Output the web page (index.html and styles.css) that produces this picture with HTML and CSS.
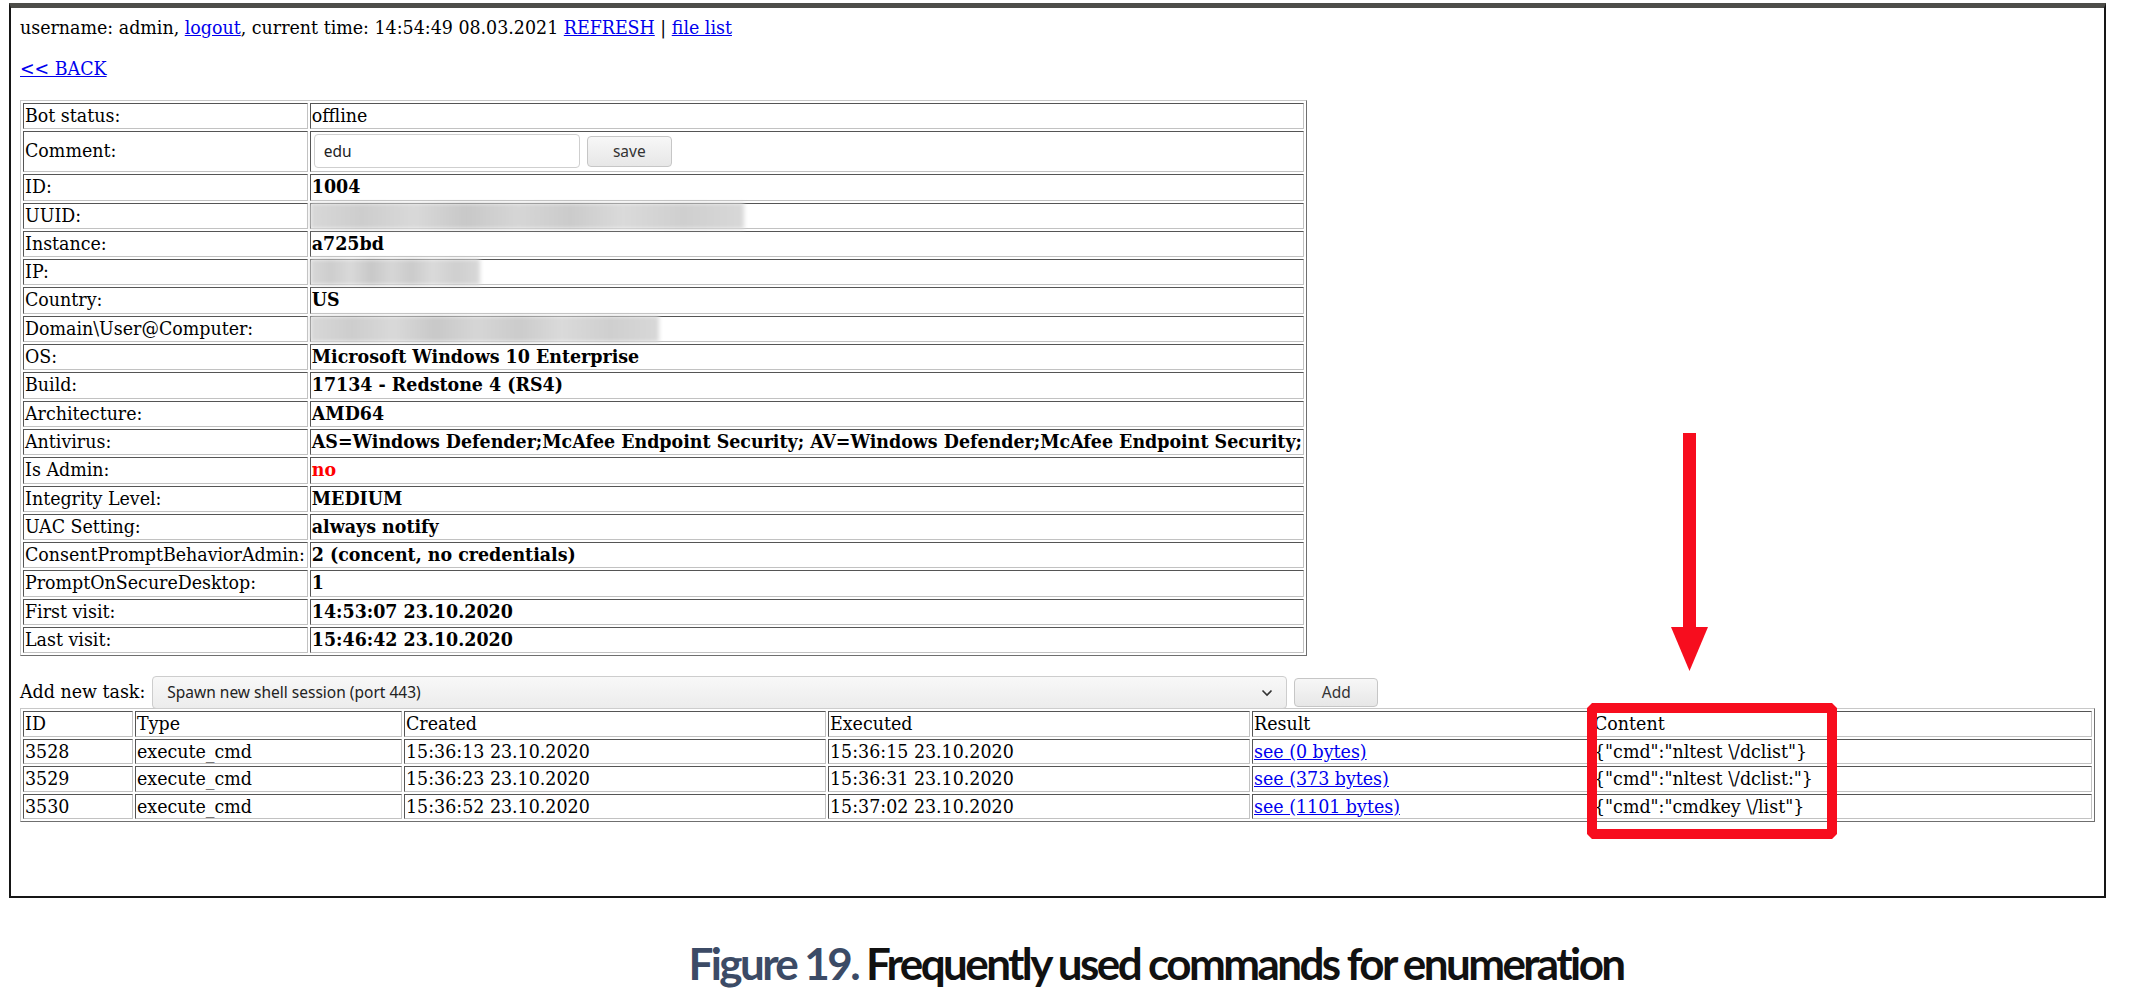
FILE: index.html
```html
<!DOCTYPE html>
<html>
<head>
<meta charset="utf-8">
<title>Bot details</title>
<link rel="stylesheet" href="styles.css">
</head>
<body>
<div class="frame">
  <p class="topline">username: admin, <a href="#">logout</a>, current time: 14:54:49 08.03.2021 <a href="#">REFRESH</a> | <a href="#">file list</a></p>
  <p class="back"><a href="#">&lt;&lt; BACK</a></p>
  <table class="info">
    <tr><td class="k">Bot status:</td><td>offline</td></tr>
    <tr class="comment-row"><td class="k">Comment:</td><td><div class="comment-form"><input class="comment-input" type="text" value="edu"><button class="btn btn-save">save</button></div></td></tr>
    <tr><td class="k">ID:</td><td><b>1004</b></td></tr>
    <tr><td class="k">UUID:</td><td class="blurred"><span class="blur blur-uuid"></span></td></tr>
    <tr><td class="k">Instance:</td><td><b>a725bd</b></td></tr>
    <tr><td class="k">IP:</td><td class="blurred"><span class="blur blur-ip"></span></td></tr>
    <tr><td class="k">Country:</td><td><b>US</b></td></tr>
    <tr><td class="k">Domain\User@Computer:</td><td class="blurred"><span class="blur blur-domain"></span></td></tr>
    <tr><td class="k">OS:</td><td><b>Microsoft Windows 10 Enterprise</b></td></tr>
    <tr><td class="k">Build:</td><td><b>17134 - Redstone 4 (RS4)</b></td></tr>
    <tr><td class="k">Architecture:</td><td><b>AMD64</b></td></tr>
    <tr><td class="k">Antivirus:</td><td><b>AS=Windows Defender;McAfee Endpoint Security; AV=Windows Defender;McAfee Endpoint Security;</b></td></tr>
    <tr><td class="k">Is Admin:</td><td><b class="red">no</b></td></tr>
    <tr><td class="k">Integrity Level:</td><td><b>MEDIUM</b></td></tr>
    <tr><td class="k">UAC Setting:</td><td><b>always notify</b></td></tr>
    <tr><td class="k">ConsentPromptBehaviorAdmin:</td><td><b>2 (concent, no credentials)</b></td></tr>
    <tr><td class="k">PromptOnSecureDesktop:</td><td><b>1</b></td></tr>
    <tr><td class="k">First visit:</td><td><b>14:53:07 23.10.2020</b></td></tr>
    <tr><td class="k">Last visit:</td><td><b>15:46:42 23.10.2020</b></td></tr>
  </table>
  <div class="task-form">
    <span class="task-label">Add new task:</span>
    <span class="select-wrap">
      <select class="task-select"><option>Spawn new shell session (port 443)</option></select>
      <svg class="chevron" width="12" height="8" viewBox="0 0 12 8"><path d="M1.5 1.5 L6 6 L10.5 1.5" fill="none" stroke="#333" stroke-width="1.6"/></svg>
    </span>
    <button class="btn btn-add">Add</button>
  </div>
  <table class="tasks">
    <colgroup><col class="c-id"><col class="c-type"><col class="c-created"><col class="c-exec"><col class="c-result"><col class="c-content"></colgroup>
    <tr><td>ID</td><td>Type</td><td>Created</td><td>Executed</td><td>Result</td><td>Content</td></tr>
    <tr><td>3528</td><td>execute_cmd</td><td>15:36:13 23.10.2020</td><td>15:36:15 23.10.2020</td><td><a href="#">see (0 bytes)</a></td><td>{"cmd":"nltest \/dclist"}</td></tr>
    <tr><td>3529</td><td>execute_cmd</td><td>15:36:23 23.10.2020</td><td>15:36:31 23.10.2020</td><td><a href="#">see (373 bytes)</a></td><td>{"cmd":"nltest \/dclist:"}</td></tr>
    <tr><td>3530</td><td>execute_cmd</td><td>15:36:52 23.10.2020</td><td>15:37:02 23.10.2020</td><td><a href="#">see (1101 bytes)</a></td><td>{"cmd":"cmdkey \/list"}</td></tr>
  </table>
</div>
<p class="caption"><span class="fig">Figure 19.</span> Frequently used commands for enumeration</p>
<svg class="annotation" width="2146" height="988" viewBox="0 0 2146 988">
  <rect x="1683" y="433" width="13" height="196" fill="#f70d1e"/>
  <path d="M1671 627 L1708 627 L1689.5 671 Z" fill="#f70d1e"/>
  <path d="M1592 708 L1832 708 L1832 834 L1592 834 Z" fill="none" stroke="#f70d1e" stroke-width="10" stroke-linejoin="bevel"/>
</svg>
</body>
</html>
```
FILE: styles.css
```css
* { box-sizing: border-box; }

body {
  margin: 0;
  width: 2146px;
  height: 988px;
  overflow: hidden;
  position: relative;
  background: #ffffff;
  color: #000;
  font-family: "DejaVu Serif Condensed", "DejaVu Serif", serif;
  font-stretch: semi-condensed;
  font-size: 19.4px;
}

.frame {
  margin: 3px 0 0 9px;
  width: 2097px;
  height: 895px;
  border: 2px solid #161616;
  border-top: 5px solid #4d4d49;
  padding: 9px 9px 0 9px;
}

a { color: #0000ee; text-decoration: underline; }

.topline { margin: 0; line-height: 22px; }
.back { margin: 19px 0 0; line-height: 22px; }

table.info,
table.tasks {
  border-collapse: separate;
  border-spacing: 2px;
  border: 1px solid;
  border-color: #c8c8c8 #6f6f6f #6f6f6f #c8c8c8;
}

table.info { margin-top: 20px; width: 1287px; }

.info td,
.tasks td {
  border: 1px solid;
  border-color: #555 #c2c2c2 #c2c2c2 #555;
  padding: 1px;
  line-height: 22.3px;
  white-space: nowrap;
  vertical-align: middle;
}

.info td.k { width: 286px; }
.red { color: #ff0000; }

.comment-row td { padding: 2px 1px 3px; }
.comment-form { display: flex; align-items: center; gap: 7px; padding-left: 2px; }

.comment-input {
  width: 266px;
  height: 34px;
  border: 1px solid #cfcfcf;
  border-radius: 4px;
  padding: 0 9px;
  font-family: "Noto Sans", sans-serif;
  font-size: 15.5px;
  color: #222;
  background: #fff;
}

.btn {
  border: 1px solid #c6c6c6;
  border-radius: 4px;
  background: linear-gradient(#f7f7f7, #e7e7e7);
  font-family: "Noto Sans", sans-serif;
  font-size: 15.5px;
  color: #333;
  padding: 0;
}

.btn-save { width: 85px; height: 31px; }
.btn-add { width: 84px; height: 29px; margin-left: 7px; }

.info td.blurred { padding: 0; }
.blur {
  display: block;
  height: 26px;
  margin: -1px 0 -1px -1px;
  background: linear-gradient(90deg, #d8d8d8 0%, #cdcdcd 12%, #d9d9d9 24%, #c8c8c8 36%, #d6d6d6 48%, #cbcbcb 60%, #dadada 72%, #cfcfcf 86%, #d8d8d8 100%);
  filter: blur(2px);
}
.blur-uuid { width: 434px; }
.blur-ip { width: 170px; }
.blur-domain { width: 349px; }

.task-form {
  display: flex;
  align-items: center;
  margin-top: 20px;
  height: 32px;
}

.task-label { line-height: 22px; }

.select-wrap { position: relative; margin-left: 7px; display: flex; }

.task-select {
  appearance: none;
  -webkit-appearance: none;
  width: 1135px;
  height: 33px;
  border: 1px solid #cdcdcd;
  border-radius: 4px;
  background: linear-gradient(#f8f8f8, #ececec);
  padding: 0 14px;
  font-family: "Noto Sans", sans-serif;
  font-size: 15.5px;
  color: #222;
}

.chevron { position: absolute; right: 14px; top: 13px; }

table.tasks { width: 100%; table-layout: fixed; margin-top: 0; }
.tasks td { line-height: 21.4px; overflow: hidden; }
.c-id { width: 110px; }
.c-type { width: 267px; }
.c-created { width: 422px; }
.c-exec { width: 422px; }
.c-result { width: 338px; }

.caption {
  margin: 42px 0 0;
  padding-left: 166px;
  text-align: center;
  font-family: "Lato", sans-serif;
  font-weight: 700;
  font-size: 44px;
  line-height: 46px;
  letter-spacing: -2.6px;
  color: #111;
}
.caption .fig { color: #3c4b66; }

.annotation { position: absolute; left: 0; top: 0; pointer-events: none; }
```
